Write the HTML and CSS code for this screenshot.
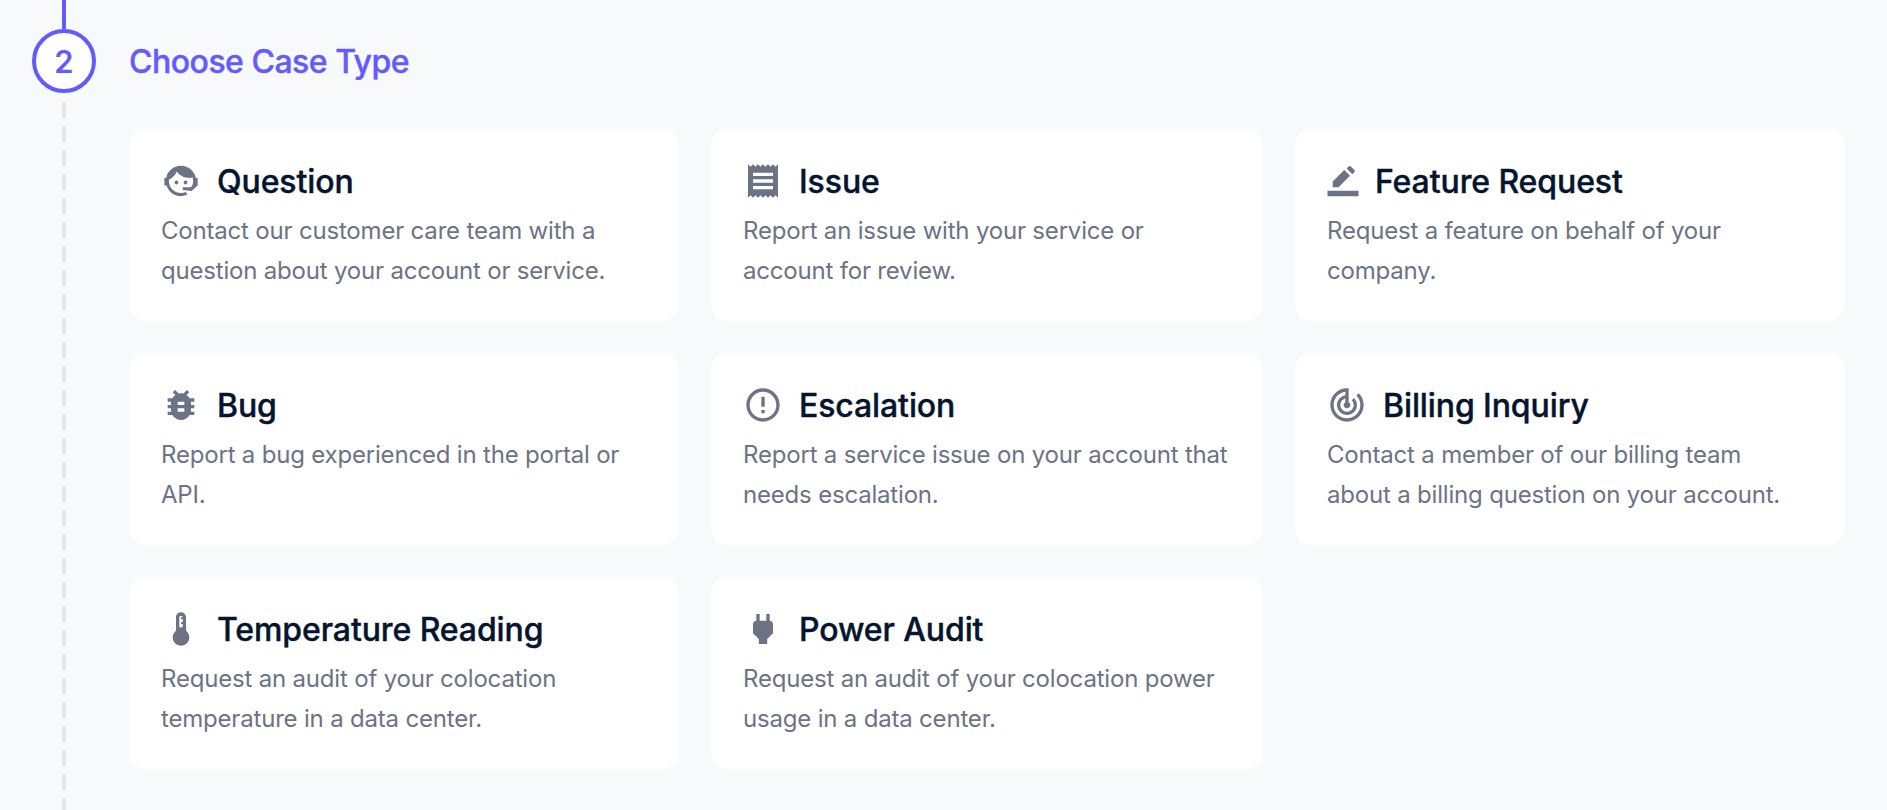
FILE: index.html
```
<!DOCTYPE html>
<html lang="en">

<head>
    <meta charset="UTF-8">
    <meta name="viewport" content="width=device-width, initial-scale=1.0">
    <title>Choose Case Type</title>
    <link rel="stylesheet" href="styles.css">
</head>

<body>

    <div class="step">
        <div class="step_rail">
            <div class="line_done"></div>
            <div class="step_number">2</div>
            <div class="line_next"></div>
        </div>

        <div class="step_content">
            <h2 class="step_title">Choose Case Type</h2>

            <div class="cards">
                <div class="card">
                    <div class="card_head">
                        <svg class="icon" viewBox="0 0 24 24"><path d="M18.72 14.76C19.07 13.91 19.26 13 19.26 12C19.26 11.28 19.15 10.59 18.96 9.95C18.31 10.1 17.63 10.18 16.92 10.18C13.86 10.18 11.15 8.67 9.5 6.34C8.61 8.5 6.91 10.26 4.77 11.22C4.73 11.47 4.73 11.74 4.73 12A7.27 7.27 0 0 0 12 19.27C13.05 19.27 14.06 19.04 14.97 18.63C15.54 19.72 15.8 20.26 15.78 20.26C14.14 20.81 12.87 21.08 12 21.08C9.58 21.08 7.27 20.13 5.57 18.42C4.53 17.38 3.76 16.11 3.33 14.73H2V10.18H3.09C3.93 6.04 7.6 2.92 12 2.92C14.4 2.92 16.71 3.87 18.42 5.58C19.69 6.84 20.54 8.45 20.89 10.18H22V14.73H21.94L18.38 18L13.08 17.4V15.73H17.91L18.72 14.76M9.27 11.77C9.57 11.77 9.86 11.89 10.07 12.11C10.28 12.32 10.4 12.61 10.4 12.91C10.4 13.21 10.28 13.5 10.07 13.71C9.86 13.92 9.57 14.04 9.27 14.04C8.64 14.04 8.13 13.54 8.13 12.91C8.13 12.28 8.64 11.77 9.27 11.77M14.72 11.77C15.35 11.77 15.85 12.28 15.85 12.91C15.85 13.54 15.35 14.04 14.72 14.04C14.09 14.04 13.58 13.54 13.58 12.91A1.14 1.14 0 0 1 14.72 11.77Z"/></svg>
                        <h3>Question</h3>
                    </div>
                    <p>Contact our customer care team with a question about your account or service.</p>
                </div>

                <div class="card">
                    <div class="card_head">
                        <svg class="icon" viewBox="0 0 24 24"><path d="M18 17H6v-2h12v2zm0-4H6v-2h12v2zm0-4H6V7h12v2zM3 22l1.5-1.5L6 22l1.5-1.5L9 22l1.5-1.5L12 22l1.5-1.5L15 22l1.5-1.5L18 22l1.5-1.5L21 22V2l-1.5 1.5L18 2l-1.5 1.5L15 2l-1.5 1.5L12 2l-1.5 1.5L9 2 7.5 3.5 6 2 4.5 3.5 3 2v20z"/></svg>
                        <h3>Issue</h3>
                    </div>
                    <p>Report an issue with your service or account for review.</p>
                </div>

                <div class="card">
                    <div class="card_head">
                        <svg class="icon icon_small" viewBox="0 0 32 40"><path d="M.5 29.700h31v5.600H.5zM5.700 26.300v-5.800L17.200 9l5.800 5.800L11.500 26.300zM19.600 7.600l2-2q1.100-1 2.200 0l3.500 3.500q1 1.100 0 2.200l-2 2z"/></svg>
                        <h3>Feature Request</h3>
                    </div>
                    <p>Request a feature on behalf of your company.</p>
                </div>

                <div class="card">
                    <div class="card_head">
                        <svg class="icon" viewBox="0 0 24 24"><path d="M20 8h-2.810c-.45-.78-1.070-1.450-1.820-1.960L17 4.410 15.590 3l-2.170 2.170C12.960 5.060 12.490 5 12 5c-.49 0-.96.06-1.410.17L8.410 3 7 4.410l1.620 1.630C7.880 6.550 7.260 7.220 6.810 8H4v2h2.090c-.05.33-.09.66-.09 1v1H4v2h2v1c0 .34.04.67.09 1H4v2h2.810c1.040 1.790 2.970 3 5.190 3s4.150-1.210 5.190-3H20v-2h-2.090c.05-.33.09-.66.09-1v-1h2v-2h-2v-1c0-.34-.04-.67-.09-1H20V8zm-6 8h-4v-2h4v2zm0-4h-4v-2h4v2z"/></svg>
                        <h3>Bug</h3>
                    </div>
                    <p>Report a bug experienced in the portal or API.</p>
                </div>

                <div class="card">
                    <div class="card_head">
                        <svg class="icon" viewBox="0 0 24 24"><path d="M11 15h2v2h-2zm0-8h2v6h-2zm.99-5C6.470 2 2 6.480 2 12s4.470 10 9.990 10C17.520 22 22 17.520 22 12S17.520 2 11.990 2zM12 20c-4.420 0-8-3.580-8-8s3.580-8 8-8 8 3.580 8 8-3.580 8-8 8z"/></svg>
                        <h3>Escalation</h3>
                    </div>
                    <p>Report a service issue on your account that needs escalation.</p>
                </div>

                <div class="card">
                    <div class="card_head">
                        <svg class="icon" viewBox="0 0 24 24"><path d="M19.070 4.930l-1.410 1.410C19.100 7.790 20 9.790 20 12c0 4.420-3.580 8-8 8s-8-3.580-8-8c0-4.080 3.050-7.440 7-7.930v2.020C8.160 6.570 6 9.030 6 12c0 3.310 2.690 6 6 6s6-2.690 6-6c0-1.660-.67-3.160-1.760-4.240l-1.410 1.410C15.550 9.900 16 10.900 16 12c0 2.210-1.790 4-4 4s-4-1.790-4-4c0-1.860 1.280-3.410 3-3.860v2.140c-.6.35-1 .98-1 1.720 0 1.100.9 2 2 2s2-.9 2-2c0-.74-.4-1.380-1-1.720V2h-1C6.480 2 2 6.480 2 12s4.480 10 10 10 10-4.480 10-10c0-2.760-1.120-5.260-2.930-7.070z"/></svg>
                        <h3>Billing Inquiry</h3>
                    </div>
                    <p>Contact a member of our billing team<br>about a billing question on your account.</p>
                </div>

                <div class="card">
                    <div class="card_head">
                        <svg class="icon" viewBox="0 0 24 24"><path d="M15 13V5c0-1.660-1.340-3-3-3S9 3.340 9 5v8c-1.210.91-2 2.370-2 4 0 2.760 2.240 5 5 5s5-2.240 5-5c0-1.630-.79-3.090-2-4zm-4-8c0-.55.45-1 1-1s1 .45 1 1h-1v1h1v2h-1v1h1v2h-2V5z"/></svg>
                        <h3>Temperature Reading</h3>
                    </div>
                    <p>Request an audit of your colocation temperature in a data center.</p>
                </div>

                <div class="card">
                    <div class="card_head">
                        <svg class="icon" viewBox="0 0 24 24"><path d="M16.010 7L16 3h-2v4h-4V3H8v4h-.01C7 6.990 6 7.990 6 8.990v5.490L9.500 18v3h5v-3l3.500-3.510v-5.500c0-1-1-2-1.990-1.990z"/></svg>
                        <h3>Power Audit</h3>
                    </div>
                    <p>Request an audit of your colocation power usage in a data center.</p>
                </div>
            </div>
        </div>
    </div>

</body>

</html>
```
FILE: styles.css
```
*{
    box-sizing: border-box;
}

body{
    margin: 0;
    background-color: #f8f9fb;
    font-family: Inter, "Liberation Sans", sans-serif;
    overflow: hidden;
}

h2,h3,p{
    margin: 0;
}

.step{
    display: flex;
    height: 810px;
    padding: 0 42px 0 32px;
    gap: 33px;
}

.step_rail{
    display: flex;
    flex-direction: column;
    align-items: center;
    width: 64px;
}

.line_done{
    width: 4px;
    height: 29px;
    background-color: #635bff;
}

.step_number{
    display: flex;
    align-items: center;
    justify-content: center;
    width: 64px;
    height: 64px;
    padding-top: 1px;
    border: 4px solid #635bff;
    border-radius: 50%;
    background-color: white;
    color: #635bff;
    font-size: 31px;
    font-weight: 600;
}

/* 16px dash, 8px space */
.line_next{
    flex: 1;
    width: 4px;
    margin-top: 9px;
    background: repeating-linear-gradient(#e3e5e7 0 16px, transparent 16px 24px);
}

.step_content{
    flex: 1;
}

.step_title{
    margin-top: 42px;
    color: #635bff;
    font-size: 32px;
    font-weight: 500;
    letter-spacing: -0.5px;
    line-height: 40px;
    -webkit-text-stroke: 0.4px;
}

.cards{
    display: grid;
    grid-template-columns: 550px 552px 550px;
    gap: 32px;
    margin-top: 47px;
}

.card{
    height: 192px;
    padding: 32px;
    border-radius: 16px;
    background-color: white;
}

.card_head{
    display: flex;
    align-items: center;
    gap: 16px;
    height: 40px;
}

.card_head h3{
    margin-top: 2px;
    color: #06152f;
    font-size: 32px;
    font-weight: 500;
    letter-spacing: -0.1px;
    line-height: 40px;
    white-space: nowrap;
    -webkit-text-stroke: 0.4px;
}

.icon{
    width: 40px;
    height: 40px;
    fill: #6b7385;
}

.icon_small{
    width: 32px;
}

.card p{
    margin-top: 10px;
    color: #6b7385;
    font-size: 24px;
    letter-spacing: -0.19px;
    line-height: 40px;
}
```
